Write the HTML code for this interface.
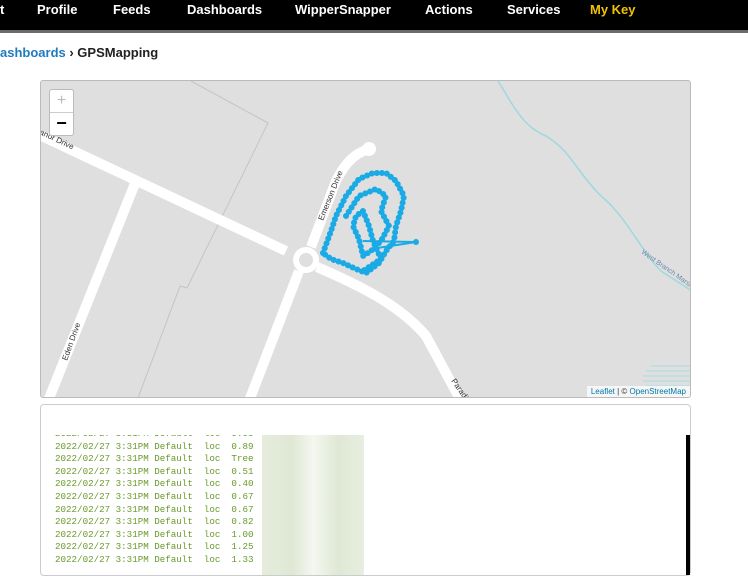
<!DOCTYPE html>
<html><head><style>
body{margin:0;width:748px;height:561px;overflow:hidden;background:#fff;font-family:"Liberation Sans",sans-serif;position:relative}
.nav{position:absolute;left:0;top:0;width:748px;height:30px;background:#000}
.bar{position:absolute;left:0;top:30px;width:748px;height:3px;background:#6a6a6a}
.nav span{position:absolute;top:2px;color:#fff;font-size:13px;font-weight:bold}
.crumb{position:absolute;top:45px;left:0;font-size:13px;font-weight:bold;color:#222}
.crumb b{color:#1f7bbf}
.map{position:absolute;left:40px;top:80px;width:649px;height:316px;border:1px solid #bbb;border-radius:3px;background:#dfdfdf;overflow:hidden}
.panel{position:absolute;left:40px;top:404px;width:649px;height:170px;border:1px solid #ccc;border-radius:4px;background:#fff}
.logwrap{position:absolute;left:14px;top:30px;width:220px;height:140px;overflow:hidden}
.log{position:absolute;left:0;top:-7px;font-family:"Liberation Mono",monospace;font-size:9.2px;line-height:12.6px;color:#6a9a2a;white-space:pre}
.zoom{position:absolute;left:8px;top:8px;width:23px;height:45px;background:#fff;border:1px solid #bbb;border-radius:3px}
</style></head><body>
<div class="nav">
<span style="left:0">t</span><span style="left:37px">Profile</span><span style="left:113px">Feeds</span><span style="left:187px">Dashboards</span><span style="left:295px">WipperSnapper</span><span style="left:425px">Actions</span><span style="left:507px">Services</span><span style="left:590px;color:#f2c200">My Key</span>
</div>
<div class="bar"></div>
<div class="crumb"><b>ashboards</b> &rsaquo; GPSMapping</div>
<div class="map">
<svg width="649" height="316" viewBox="40 80 649 316" style="position:absolute;left:0;top:0">
<polyline points="190,80 267,122 186,287 179,285 137,397" fill="none" stroke="#c4c4c4" stroke-width="1"/>
<path d="M497,80 C510,100 520,125 545,135 C570,150 575,170 600,195 C625,215 640,250 660,270 L691,290" fill="none" stroke="#9fd8df" stroke-width="1.5"/>
<g stroke="#a8dce0" stroke-width="1"><line x1="650" y1="365" x2="691" y2="365"/><line x1="645" y1="370" x2="691" y2="370"/><line x1="642" y1="375" x2="691" y2="375"/><line x1="642" y1="380" x2="691" y2="380"/><line x1="645" y1="385" x2="691" y2="385"/></g>
<g fill="none" stroke="#fff" stroke-width="10">
<path d="M30,130 L285,250"/>
<path d="M135,180 L47,400"/>
<path d="M298,270 L248,400"/>
<path d="M316,266 C360,285 400,305 425,335 L460,400"/>
<path d="M310,246 L335,180 C345,160 355,152 368,148"/>
</g>
<circle cx="368" cy="148" r="7" fill="#fff"/>
<circle cx="305" cy="259" r="13" fill="#fff"/><circle cx="305" cy="259" r="7" fill="#dfdfdf"/>
<g fill="#333" font-size="8" font-family="Liberation Sans,sans-serif">
<text x="38" y="133" transform="rotate(25 38 133)">anor Drive</text>
<text x="66" y="360" transform="rotate(-70 66 360)">Eden Drive</text>
<text x="322" y="220" transform="rotate(-68 322 220)">Emerson Drive</text>
<text x="450" y="380" transform="rotate(55 450 380)">Paradi</text>
</g>
<text x="640" y="252" transform="rotate(35 640 252)" font-size="7" fill="#6a8bb0" font-family="Liberation Sans,sans-serif">West Branch Marsh</text>
<g fill="none" stroke="#1aaae6" stroke-width="6" stroke-dasharray="0.1 5" stroke-linecap="round">
<polyline points="322,252 330,230 335,215 345,195 358,178 372,172 385,172 395,180 403,195 400,210 395,225 393,240 385,250 378,262 365,272 355,268 342,262 330,258 322,252"/>
<polyline points="345,215 358,195 375,188 385,195 380,210 388,225 380,240 370,250 362,255 358,238 352,225 355,215 362,210 368,225 372,240 380,258 362,270"/>
</g>
<g fill="none" stroke="#1aaae6" stroke-width="2">
<polyline points="322,252 330,230 335,215 345,195 358,178 372,172 385,172 395,180 403,195 400,210 395,225 393,240 385,250 378,262 365,272 355,268 342,262 330,258 322,252"/>
<polyline points="345,215 358,195 375,188 385,195 380,210 388,225 380,240 370,250 362,255 358,238 352,225 355,215 362,210 368,225 372,240 380,258 362,270"/>
<polyline points="362,240 415,241 370,248"/>
</g>
<circle cx="415" cy="241" r="3" fill="#1aaae6"/>
</svg>
<div class="zoom"><div style="height:22px;border-bottom:1px solid #ccc;text-align:center;color:#bbb;font-size:16px;line-height:22px">+</div><div style="text-align:center;font-size:18px;font-weight:bold;line-height:20px">&minus;</div></div>
<div style="position:absolute;right:0;bottom:0;background:rgba(255,255,255,.7);font-size:8px;padding:1px 4px;color:#333"><span style="color:#0078a8">Leaflet</span> | © <span style="color:#0078a8">OpenStreetMap</span></div>
</div>
<div class="panel">
<div class="logwrap"><div class="log">2022/02/27 3:31PM Default  loc  0.55
2022/02/27 3:31PM Default  loc  0.89
2022/02/27 3:31PM Default  loc  Tree
2022/02/27 3:31PM Default  loc  0.51
2022/02/27 3:31PM Default  loc  0.40
2022/02/27 3:31PM Default  loc  0.67
2022/02/27 3:31PM Default  loc  0.67
2022/02/27 3:31PM Default  loc  0.82
2022/02/27 3:31PM Default  loc  1.00
2022/02/27 3:31PM Default  loc  1.25
2022/02/27 3:31PM Default  loc  1.33</div></div>
<div style="position:absolute;left:221px;top:30px;width:102px;height:140px;background:linear-gradient(90deg,#e6ecdc,#dfe8d4 30%,#f4f7f0 50%,#dfe8d4 75%,#e8eee0)"></div>
<div style="position:absolute;left:645px;top:30px;width:4px;height:140px;background:#000"></div>
</div>
</body></html>
